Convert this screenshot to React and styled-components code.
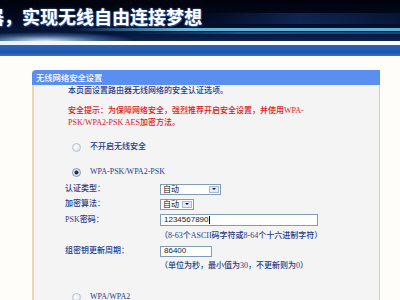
import React from "react"
import styled, { createGlobalStyle } from "styled-components"

const GlobalStyle = createGlobalStyle`
  html, body {
    margin: 0;
    padding: 0;
    overflow: hidden;
    background: #fffdfa;
  }
  body {
    font-family: "Liberation Serif", "Noto Sans CJK SC", serif;
  }
`

const Page = styled.div`
  width: 400px;
  height: 300px;
  overflow: hidden;
  background: #fffdfa;
`

const Banner = styled.header`
  height: 41px;
  overflow: hidden;
  box-sizing: border-box;
  padding-top: 6px;
  background:
    linear-gradient(90deg, rgba(90, 180, 230, 0) 18%, rgba(120, 205, 240, 0.85) 45%, rgba(100, 195, 235, 0.9) 100%) 0 28px / 100% 3px no-repeat,
    linear-gradient(90deg, rgba(60, 130, 200, 0) 30%, rgba(60, 140, 210, 0.5) 60%, rgba(60, 140, 210, 0.4) 100%) 0 32px / 100% 2px no-repeat,
    linear-gradient(90deg, rgba(30, 60, 130, 0) 50%, rgba(30, 70, 140, 0.45) 75%, rgba(20, 50, 110, 0.3) 100%) 0 13px / 100% 11px no-repeat,
    radial-gradient(ellipse 90px 9px at 45px 41px, rgba(225, 242, 255, 0.95), rgba(120, 180, 230, 0.4) 60%, transparent 100%),
    linear-gradient(180deg, #00030c 0%, #020a22 50%, #06163a 80%, #0c2550 100%);
`

const Slogan = styled.div`
  margin-left: -14px;
  white-space: nowrap;
  font-family: "Noto Sans CJK SC", sans-serif;
  font-weight: 700;
  font-size: 18px;
  line-height: 20px;
  color: #fff;
  text-shadow: 0 0 2px #5f8fd8, 1px 1px 1px #24467e;
`

const WhiteStripe = styled.div`
  height: 4px;
  background: linear-gradient(90deg, #e8f2fb, #ffffff 30%);
`

const BlueBar = styled.div`
  height: 11px;
  background: linear-gradient(180deg, #2a66bd 0%, #1d55a8 70%, #3d73c0 100%);
`

const Main = styled.main`
  padding: 14px 0 0 32px;
`

const Panel = styled.section`
  width: 348px;
`

const PanelTitle = styled.div`
  height: 15px;
  line-height: 15px;
  padding-left: 4px;
  border-top-left-radius: 4px;
  background: #5b8ef1;
  color: #fff;
  font-family: "Noto Sans CJK SC", sans-serif;
  font-size: 8.3px;
  font-weight: 500;
`

const PanelBody = styled.div`
  height: 230px;
  box-sizing: border-box;
  padding-left: 34px;
  border-left: 2px solid #ecd4b4;
  border-right: 1px solid #f6c49a;
  background: #f4f4f4;
  color: #1f3c8c;
  font-size: 8px;
  font-weight: 500;
  line-height: 12px;
`

const Intro = styled.p`
  margin: 0;
  white-space: nowrap;
`

const Warning = styled.p`
  margin: 8px 0 0;
  color: #e0141e;
  width: 250px;
`

const Option = styled.label`
  display: flex;
  align-items: center;
  gap: 9px;
  height: 12px;
  margin-top: ${(p) => p.$top}px;
  padding-left: 4px;
`

const Radio = styled.span`
  width: 7px;
  height: 7px;
  border-radius: 50%;
  border: 1px solid ${(p) => (p.$checked ? "#8094ac" : "#b9c0c8")};
  background: ${(p) =>
    p.$checked
      ? "radial-gradient(circle, #1d3552 0 1.7px, #e6ebf0 2.4px)"
      : "radial-gradient(circle at 40% 40%, #ffffff, #d8dde3)"};
`

const Field = styled.div`
  display: flex;
  align-items: center;
  margin: ${(p) => p.$top}px 0 0 -3px;
`

const FieldLabel = styled.span`
  width: 95px;
  flex: none;
`

const Select = styled.div`
  display: flex;
  align-items: center;
  justify-content: space-between;
  width: ${(p) => p.$w}px;
  height: 11px;
  box-sizing: border-box;
  padding: 0 1px 0 2px;
  border: 1px solid #7f9db9;
  background: #fff;
  color: #111;
  font-family: "Liberation Sans", "Noto Sans CJK SC", sans-serif;
  font-size: 8px;
  font-weight: 400;
  line-height: 9px;
`

const Arrow = styled.span`
  display: flex;
  align-items: center;
  justify-content: center;
  width: 10px;
  height: 7px;
  box-sizing: border-box;
  border: 1px solid #a9b9d2;
  background: #e3eaf5;

  &::after {
    content: "";
    border-left: 2px solid transparent;
    border-right: 2px solid transparent;
    border-top: 2px solid #1b1b1b;
  }
`

const TextBox = styled.div`
  display: flex;
  align-items: center;
  width: ${(p) => p.$w}px;
  height: ${(p) => p.$h}px;
  box-sizing: border-box;
  padding-left: 3px;
  border: 1px solid #7f9db9;
  background: #fff;
  color: #1a1a1a;
  font-family: "Liberation Sans", sans-serif;
  font-size: 8px;
  font-weight: 400;
`

const Caret = styled.span`
  width: 1px;
  height: 8px;
  background: #000;
`

const Hint = styled.div`
  margin: ${(p) => p.$top}px 0 0 92px;
  white-space: nowrap;
`

export default function App() {
  return (
    <Page>
      <GlobalStyle />
      <Banner>
        <Slogan>器，实现无线自由连接梦想</Slogan>
      </Banner>
      <WhiteStripe />
      <BlueBar />
      <Main>
        <Panel>
          <PanelTitle>无线网络安全设置</PanelTitle>
          <PanelBody>
            <Intro>本页面设置路由器无线网络的安全认证选项。</Intro>
            <Warning>
              安全提示：为保障网络安全，强烈推荐开启安全设置，并使用WPA-PSK/WPA2-PSK AES加密方法。
            </Warning>

            <Option $top={12}>
              <Radio />
              不开启无线安全
            </Option>
            <Option $top={13}>
              <Radio $checked />
              WPA-PSK/WPA2-PSK
            </Option>

            <Field $top={5}>
              <FieldLabel>认证类型：</FieldLabel>
              <Select $w={61}>
                自动
                <Arrow />
              </Select>
            </Field>
            <Field $top={3}>
              <FieldLabel>加密算法：</FieldLabel>
              <Select $w={34}>
                自动
                <Arrow />
              </Select>
            </Field>
            <Field $top={4}>
              <FieldLabel>PSK密码：</FieldLabel>
              <TextBox $w={158} $h={12}>
                1234567890
                <Caret />
              </TextBox>
            </Field>
            <Hint $top={4}>（8-63个ASCII码字符或8-64个十六进制字符）</Hint>
            <Field $top={3}>
              <FieldLabel>组密钥更新周期：</FieldLabel>
              <TextBox $w={52} $h={11}>
                86400
              </TextBox>
            </Field>
            <Hint $top={3}>（单位为秒，最小值为30，不更新则为0）</Hint>

            <Option $top={19}>
              <Radio />
              WPA/WPA2
            </Option>
          </PanelBody>
        </Panel>
      </Main>
    </Page>
  )
}
